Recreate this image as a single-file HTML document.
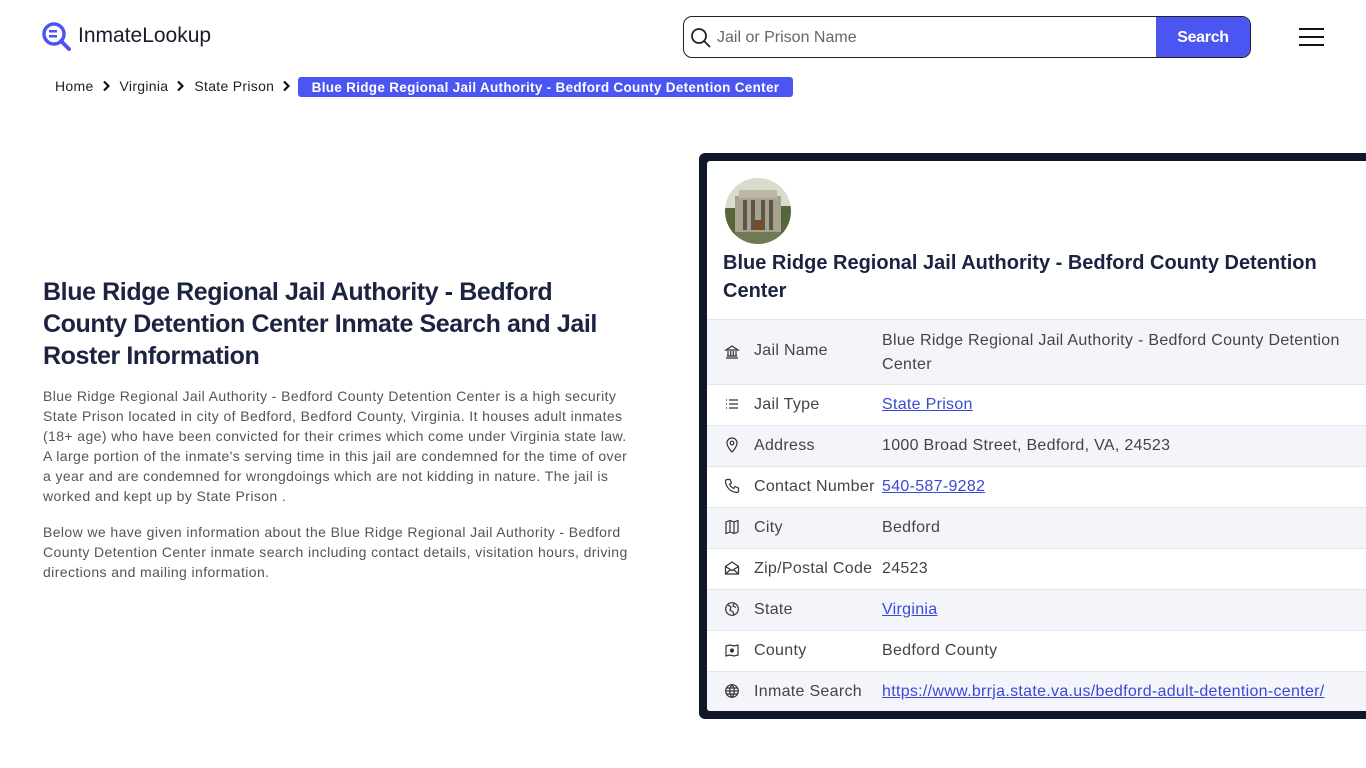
<!DOCTYPE html>
<html><head><meta charset="utf-8">
<style>
*{margin:0;padding:0;box-sizing:border-box}
body{width:1366px;height:768px;overflow:hidden;background:#fff;font-family:"Liberation Sans",sans-serif;position:relative;color:#333}
.abs{position:absolute}
.nw{white-space:nowrap}
.logo{font-size:21px;color:#1a1a2a;letter-spacing:0}
.search{left:683px;top:16px;width:568px;height:42px;border:1px solid #222;border-radius:9px;overflow:hidden;background:#fff}
.search .ph{position:absolute;left:33px;top:12px;font-size:16px;color:#666}
.search .btn{position:absolute;right:0;top:0;width:94px;height:40px;background:#4a55f2;color:#fff;font-weight:bold;font-size:16px;text-align:center;line-height:42px;letter-spacing:-0.3px}
.bc{top:77px;left:55px;font-size:14px;color:#222;height:20px;line-height:18px;letter-spacing:0.3px}
.pill{position:absolute;left:298px;top:77px;width:495px;height:20px;background:#4a55f2;color:#fff;font-weight:bold;font-size:13.5px;line-height:21px;border-radius:3px;text-align:center;letter-spacing:0.3px}
h1{position:absolute;left:43px;top:276px;font-size:25px;line-height:32px;color:#1b2340;font-weight:bold;letter-spacing:-0.4px}
.p{position:absolute;left:43px;font-size:14px;line-height:20px;color:#555;letter-spacing:0.4px}
.card{position:absolute;left:699px;top:153px;width:700px;height:566px;background:#0f1729;border-radius:6px}
.inner{position:absolute;left:8px;top:8px;right:0;bottom:8px;background:#fff;border-radius:3px;overflow:hidden}
.ct{position:absolute;left:16px;top:88px;font-size:20px;line-height:28px;font-weight:bold;color:#1b2340;letter-spacing:0}
.row{position:absolute;left:0;width:700px;border-top:1px solid #e3e5ec;font-size:16px;color:#444;letter-spacing:0.3px}
.g{background:#f4f5fb}
.row .l{position:absolute;left:47px}
.row .v{position:absolute;left:175px}
.row svg{position:absolute;left:17px}
a{color:#3b48d6;text-decoration:underline}
.chev{display:inline-block;margin:0 10px 0 8px;vertical-align:-1px}
</style></head><body>

<svg class="abs" style="left:42px;top:22px" width="30" height="30" viewBox="0 0 30 30">
<circle cx="12" cy="12" r="10" fill="none" stroke="#4a55f2" stroke-width="3.5"/>
<rect x="7" y="8" width="8" height="2.5" fill="#4a55f2"/><rect x="7" y="13" width="8" height="2.5" fill="#4a55f2"/>
<line x1="19" y1="19" x2="27" y2="27" stroke="#4a55f2" stroke-width="4" stroke-linecap="round"/>
</svg>
<div class="abs logo nw" style="left:78px;top:24px">InmateLookup</div>

<div class="abs search">
<svg class="abs" style="left:6px;top:10px" width="22" height="22" viewBox="0 0 22 22"><circle cx="9" cy="9" r="7" fill="none" stroke="#222" stroke-width="1.8"/><line x1="14" y1="14" x2="20" y2="20" stroke="#222" stroke-width="1.8"/></svg>
<div class="ph">Jail or Prison Name</div>
<div class="btn">Search</div>
</div>
<div class="abs" style="left:1299px;top:28px;width:25px;height:2px;background:#111"></div>
<div class="abs" style="left:1299px;top:36px;width:25px;height:2px;background:#111"></div>
<div class="abs" style="left:1299px;top:44px;width:25px;height:2px;background:#111"></div>

<div class="abs bc nw">Home<svg class="chev" width="8" height="12" viewBox="0 0 8 12"><path d="M2 1.5l4.5 4.5L2 10.5" fill="none" stroke="#111" stroke-width="2.2"/></svg>Virginia<svg class="chev" width="8" height="12" viewBox="0 0 8 12"><path d="M2 1.5l4.5 4.5L2 10.5" fill="none" stroke="#111" stroke-width="2.2"/></svg>State Prison<svg class="chev" width="8" height="12" viewBox="0 0 8 12"><path d="M2 1.5l4.5 4.5L2 10.5" fill="none" stroke="#111" stroke-width="2.2"/></svg></div>
<div class="pill nw">Blue Ridge Regional Jail Authority - Bedford County Detention Center</div>

<h1 class="nw">Blue Ridge Regional Jail Authority - Bedford<br>County Detention Center Inmate Search and Jail<br>Roster Information</h1>

<div class="p nw" style="top:386px">Blue Ridge Regional Jail Authority - Bedford County Detention Center is a high security<br>State Prison located in city of Bedford, Bedford County, Virginia. It houses adult inmates<br>(18+ age) who have been convicted for their crimes which come under Virginia state law.<br>A large portion of the inmate's serving time in this jail are condemned for the time of over<br>a year and are condemned for wrongdoings which are not kidding in nature. The jail is<br>worked and kept up by State Prison .</div>
<div class="p nw" style="top:522px">Below we have given information about the Blue Ridge Regional Jail Authority - Bedford<br>County Detention Center inmate search including contact details, visitation hours, driving<br>directions and mailing information.</div>

<div class="card"><div class="inner">
<svg class="abs" style="left:18px;top:17px" width="66" height="66" viewBox="0 0 66 66">
<defs><clipPath id="c"><circle cx="33" cy="33" r="33"/></clipPath></defs>
<g clip-path="url(#c)"><rect width="66" height="66" fill="#d8dccd"/><rect y="40" width="66" height="26" fill="#6f7a52"/>
<rect x="10" y="18" width="46" height="36" fill="#a9a290"/><rect x="14" y="12" width="38" height="8" fill="#bdb6a3"/>
<rect x="18" y="22" width="4" height="30" fill="#5b5647"/><rect x="26" y="22" width="4" height="30" fill="#5b5647"/><rect x="36" y="22" width="4" height="30" fill="#5b5647"/><rect x="44" y="22" width="4" height="30" fill="#5b5647"/>
<rect x="30" y="42" width="6" height="10" fill="#7a4a20"/><rect x="0" y="30" width="10" height="30" fill="#56663a"/><rect x="56" y="28" width="10" height="30" fill="#56663a"/></g></svg>
<div class="ct nw">Blue Ridge Regional Jail Authority - Bedford County Detention<br>Center</div>

<div class="row g" style="top:158px;height:65px"><svg style="top:24px" width="16" height="16" viewBox="0 0 16 16" fill="none" stroke="#333" stroke-width="1.2"><path d="M2 6L8 2l6 4zM2 14h12M3 12h10M4 7v5M6.7 7v5M9.3 7v5M12 7v5"/></svg><span class="l" style="top:22px">Jail Name</span><span class="v nw" style="top:9px;line-height:24px">Blue Ridge Regional Jail Authority - Bedford County Detention<br>Center</span></div>
<div class="row" style="top:223px;height:41px"><svg style="top:11px" width="16" height="16" viewBox="0 0 16 16" fill="none" stroke="#333" stroke-width="1.3"><path d="M5 4h9M5 8h9M5 12h9M2 4h1M2 8h1M2 12h1"/></svg><span class="l" style="top:11px">Jail Type</span><span class="v" style="top:11px"><a>State Prison</a></span></div>
<div class="row g" style="top:264px;height:41px"><svg style="top:11px" width="16" height="16" viewBox="0 0 16 16" fill="none" stroke="#333" stroke-width="1.2"><path d="M8 15s5-5 5-9A5 5 0 0 0 3 6c0 4 5 9 5 9z"/><circle cx="8" cy="6" r="1.8"/></svg><span class="l" style="top:11px">Address</span><span class="v" style="top:11px">1000 Broad Street, Bedford, VA, 24523</span></div>
<div class="row" style="top:305px;height:41px"><svg style="top:11px" width="16" height="16" viewBox="0 0 16 16" fill="none" stroke="#333" stroke-width="1.2"><path d="M3 1.5h3l1.5 3.5-2 1.3a9 9 0 0 0 4.2 4.2l1.3-2 3.5 1.5v3A1.5 1.5 0 0 1 13 14.5 12 12 0 0 1 1.5 3 1.5 1.5 0 0 1 3 1.5z"/></svg><span class="l" style="top:11px">Contact Number</span><span class="v" style="top:11px"><a>540-587-9282</a></span></div>
<div class="row g" style="top:346px;height:41px"><svg style="top:11px" width="16" height="16" viewBox="0 0 16 16" fill="none" stroke="#333" stroke-width="1.2"><path d="M2 3l4-1.5 4 1.5 4-1.5v11.5l-4 1.5-4-1.5-4 1.5zM6 1.5v11.5M10 3v11.5"/></svg><span class="l" style="top:11px">City</span><span class="v" style="top:11px">Bedford</span></div>
<div class="row" style="top:387px;height:41px"><svg style="top:11px" width="16" height="16" viewBox="0 0 16 16" fill="none" stroke="#333" stroke-width="1.2"><path d="M1.5 6.5L8 2l6.5 4.5v7.5h-13zM1.5 6.5L8 10.5l6.5-4M1.5 14l5-4.5M14.5 14l-5-4.5"/></svg><span class="l" style="top:11px">Zip/Postal Code</span><span class="v" style="top:11px">24523</span></div>
<div class="row g" style="top:428px;height:41px"><svg style="top:11px" width="16" height="16" viewBox="0 0 16 16" fill="none" stroke="#333" stroke-width="1.2"><circle cx="8" cy="8" r="6.3"/><path d="M4 4l3 2-1 3 3 2 1 3M10 2.5l-1 2.5 3 1.5"/></svg><span class="l" style="top:11px">State</span><span class="v" style="top:11px"><a>Virginia</a></span></div>
<div class="row" style="top:469px;height:41px"><svg style="top:11px" width="16" height="16" viewBox="0 0 16 16" fill="none" stroke="#333" stroke-width="1.2"><path d="M2 4l4-1 4 1 4-1v10l-4 1-4-1-4 1z"/><circle cx="8" cy="8.5" r="1.5" fill="#333"/></svg><span class="l" style="top:11px">County</span><span class="v" style="top:11px">Bedford County</span></div>
<div class="row g" style="top:510px;height:41px"><svg style="top:11px" width="16" height="16" viewBox="0 0 16 16" fill="none" stroke="#333" stroke-width="1.2"><circle cx="8" cy="8" r="6.3"/><path d="M1.7 8h12.6M8 1.7c-3 3.5-3 9 0 12.6M8 1.7c3 3.5 3 9 0 12.6M2.5 5h11M2.5 11h11"/></svg><span class="l" style="top:11px">Inmate Search</span><span class="v nw" style="top:11px"><a>https://www.brrja.state.va.us/bedford-adult-detention-center/</a></span></div>
</div></div>
</body></html>
